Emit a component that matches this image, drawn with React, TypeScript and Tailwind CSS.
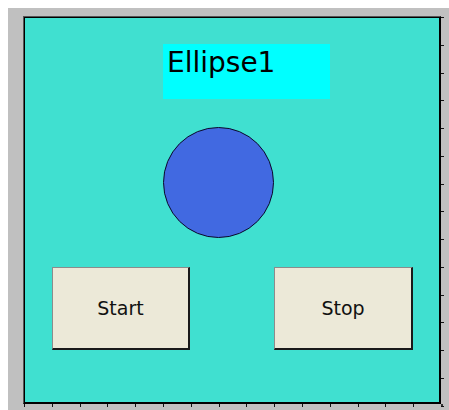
import React from "react";

const bottomTicks = Array.from({ length: 16 }, (_, k) => Math.round(24 + 27.8 * k));
const rightTicks = Array.from({ length: 15 }, (_, k) => Math.round(17 + 27.75 * k));

function Btn({ label, w }: { label: string; w: string }) {
  return (
    <div
      className={`${w} h-[83px] flex items-center justify-center bg-[#ece9d8] border-t border-l border-[#8c8c8c] border-r-2 border-b-2 border-r-[#1a1a1a] border-b-[#1a1a1a] text-[19px] text-[#111] leading-none`}
      style={{ fontFamily: '"DejaVu Sans", Verdana, sans-serif' }}
    >
      {label}
    </div>
  );
}

export default function App() {
  return (
    <div className="relative w-[449px] h-[410px] bg-white pt-[8px] pl-[8px] flex overflow-hidden">
      <div className="flex-1 bg-[#c0c0c0] pl-[15px] pt-[8px]">
        <div className="w-[418px] h-[388px] border-t border-l border-t-[#555] border-l-[#555] border-r border-b border-r-black border-b-black">
          <div className="w-full h-full border-t border-l border-r border-b border-black bg-[#40e0d0] flex flex-col">
            <div
              className="ml-[138px] mt-[26px] w-[167px] h-[55px] bg-[#00ffff] pl-[4px] pt-[5px] text-[28px] leading-[28px] text-black"
              style={{ fontFamily: '"DejaVu Sans", Verdana, sans-serif' }}
            >
              Ellipse1
            </div>
            <div className="ml-[138px] mt-[28px] w-[111px] h-[111px] rounded-full bg-[#4169e1] border border-[#0a0a2a]" />
            <div className="mt-[29px] pl-[27px] flex gap-[84px]">
              <Btn label="Start" w="w-[138px]" />
              <Btn label="Stop" w="w-[139px]" />
            </div>
          </div>
        </div>
      </div>
      <svg className="absolute left-0 top-0 pointer-events-none" width="449" height="410">
        {bottomTicks.map((x) => (
          <rect key={"b" + x} x={x} y={404} width={1} height={3} fill="#111" />
        ))}
        {rightTicks.map((y) => (
          <rect key={"r" + y} x={441} y={y} width={3} height={1} fill="#111" />
        ))}
        <rect x={441} y={404} width={2} height={2} fill="#333" />
      </svg>
    </div>
  );
}
